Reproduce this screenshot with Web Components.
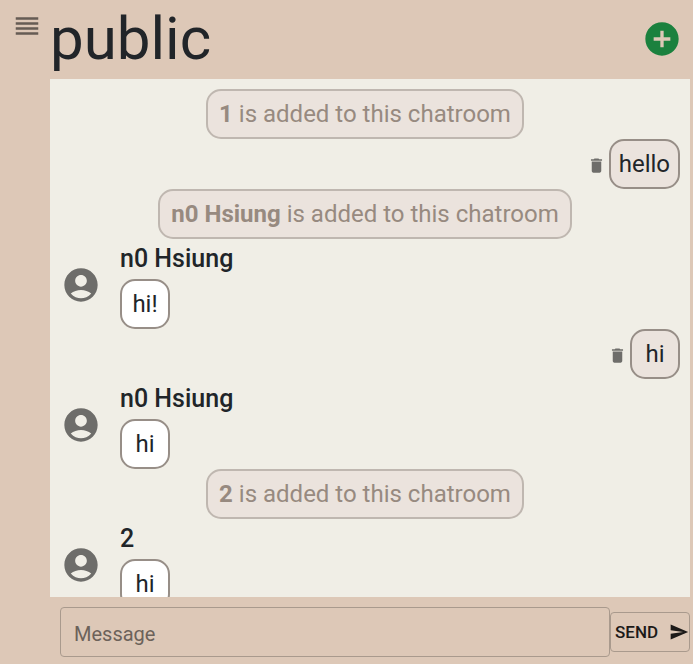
<!DOCTYPE html>
<html lang="en">
<head>
<meta charset="utf-8">
<title>public</title>
<style>
  html, body { height: 100%; }
  body { margin: 0; background: #ddc8b7; color: #212529; font-family: Roboto, "Liberation Sans", sans-serif; font-size: 24px; line-height: 36px; }
</style>
</head>
<body>
<chat-app></chat-app>
<script>
const ICONS = {
  menu: "M3 15h18v-2H3v2zm0 4h18v-2H3v2zm0-8h18V9H3v2zm0-6v2h18V5H3z",
  add: "M12 2C6.48 2 2 6.48 2 12s4.48 10 10 10 10-4.48 10-10S17.52 2 12 2zm5 11h-4v4h-2v-4H7v-2h4V7h2v4h4v2z",
  account: "M12 2C6.48 2 2 6.48 2 12s4.48 10 10 10 10-4.48 10-10S17.52 2 12 2zm0 4c1.93 0 3.5 1.57 3.5 3.5S13.93 13 12 13s-3.5-1.57-3.5-3.5S10.07 6 12 6zm0 14c-2.03 0-4.43-.82-6.14-2.88C7.55 15.8 9.68 15 12 15s4.45.8 6.14 2.12C16.43 19.18 14.03 20 12 20z",
  trash: "M6 19c0 1.1.9 2 2 2h8c1.1 0 2-.9 2-2V7H6v12zM19 4h-3.5l-1-1h-5l-1 1H5v2h14V4z",
  send: "M2.01 21L23 12 2.01 3 2 10l15 2-15 2z"
};

function define(name, render) {
  customElements.define(name, class extends HTMLElement {
    constructor() { super(); this.attachShadow({ mode: "open" }); }
    connectedCallback() { this.shadowRoot.innerHTML = render(this); }
  });
}

const buttonReset = `button { display: flex; align-items: center; margin: 0; padding: 0; border: 0; background: none; color: inherit; font: inherit; cursor: pointer; }`;

define("app-icon", el => `
  <style>:host { display: block; flex: none; width: var(--size, 24px); height: var(--size, 24px); } svg { display: block; width: 100%; height: 100%; fill: currentColor; }</style>
  <svg viewBox="0 0 24 24" aria-hidden="true"><path d="${ICONS[el.getAttribute("name")]}"/></svg>`);

define("chat-rail", () => `
  <style>:host { display: flex; justify-content: center; align-items: flex-start; padding: 11px 0 0 4px; box-sizing: border-box; color: rgba(0,0,0,.54); } ${buttonReset} app-icon { --size: 30px; }</style>
  <button type="button" aria-label="Open menu"><app-icon name="menu"></app-icon></button>`);

define("chat-header", () => `
  <style>
    :host { display: flex; align-items: center; justify-content: space-between; padding: 3px 8px 4px 0; }
    h1 { margin: 0; font-size: 60px; line-height: 72px; font-weight: 400; }
    ${buttonReset}
    button { color: #1b813e; }
    app-icon { --size: 40px; }
  </style>
  <h1><slot></slot></h1>
  <button type="button" aria-label="Add member"><app-icon name="add"></app-icon></button>`);

define("chat-bubble", () => `
  <style>
    :host { display: flex; align-items: center; justify-content: center; box-sizing: border-box; min-width: 50px; height: 50px; padding: 0 8px; background: #fff; border: 2px solid #978e87; border-radius: 15px; white-space: nowrap; }
    :host([tone="own"]) { background: #ebe3dd; }
    :host([tone="notice"]) { padding: 0 11px; background: #ebe3dd; border-color: #bfb7b0; color: #978a80; }
  </style>
  <span><slot></slot></span>`);

define("chat-notice", () => `
  <style>:host { display: flex; justify-content: center; }</style>
  <chat-bubble tone="notice"><slot></slot></chat-bubble>`);

define("own-message", () => `
  <style>:host { display: flex; justify-content: flex-end; align-items: center; gap: 3px; } ${buttonReset} button { padding-top: 3px; color: #6e6d6a; } app-icon { --size: 19px; }</style>
  <button type="button" aria-label="Delete message"><app-icon name="trash"></app-icon></button>
  <chat-bubble tone="own"><slot></slot></chat-bubble>`);

define("peer-message", el => `
  <style>
    :host { display: grid; grid-template-columns: 59px auto; justify-content: start; align-items: center; padding-left: 11px; }
    app-icon { --size: 40px; margin-top: 2px; color: #6e6d6a; }
    .body { display: flex; flex-direction: column; align-items: flex-start; }
    .name { font-size: 25px; font-weight: 500; line-height: 40px; }
  </style>
  <app-icon name="account"></app-icon>
  <div class="body"><div class="name">${el.getAttribute("from")}</div><chat-bubble><slot></slot></chat-bubble></div>`);

define("chat-log", () => `
  <style>:host { display: block; overflow: hidden; min-height: 0; padding: 10px 10px 0 0; background: #f0eee6; }</style>
  <slot></slot>`);

define("chat-composer", () => `
  <style>
    :host { display: flex; align-items: center; padding: 10px 0 7px 10px; }
    input { flex: 1; min-width: 0; height: 50px; box-sizing: border-box; margin: 0; padding: 4px 13px 0; border: 1px solid #a99a8d; border-radius: 4px; background: transparent; color: inherit; font: 400 20px/24px Roboto, "Liberation Sans", sans-serif; outline: 0; }
    input::placeholder { color: #6c625a; opacity: 1; }
    ${buttonReset}
    button { justify-content: space-between; width: 80px; height: 40px; box-sizing: border-box; padding: 0 0 0 4px; border: 1px solid #a99a8d; border-radius: 4px; color: #1c1a18; font-size: 17px; font-weight: 500; line-height: 24px; }
    app-icon { --size: 20px; }
  </style>
  <input type="text" placeholder="Message" aria-label="Message">
  <button type="button">SEND<app-icon name="send"></app-icon></button>`);

define("chat-app", () => `
  <style>
    :host { display: grid; grid-template-columns: 50px minmax(0, 1fr); height: 100vh; padding-right: 3px; box-sizing: border-box; overflow: hidden; }
    main { display: grid; grid-template-rows: auto minmax(0, 1fr) auto; min-height: 0; }
  </style>
  <chat-rail></chat-rail>
  <main>
    <chat-header>public</chat-header>
    <chat-log>
      <chat-notice><b>1</b> is added to this chatroom</chat-notice>
      <own-message>hello</own-message>
      <chat-notice><b>n0 Hsiung</b> is added to this chatroom</chat-notice>
      <peer-message from="n0 Hsiung">hi!</peer-message>
      <own-message>hi</own-message>
      <peer-message from="n0 Hsiung">hi</peer-message>
      <chat-notice><b>2</b> is added to this chatroom</chat-notice>
      <peer-message from="2">hi</peer-message>
    </chat-log>
    <chat-composer></chat-composer>
  </main>`);
</script>
</body>
</html>
